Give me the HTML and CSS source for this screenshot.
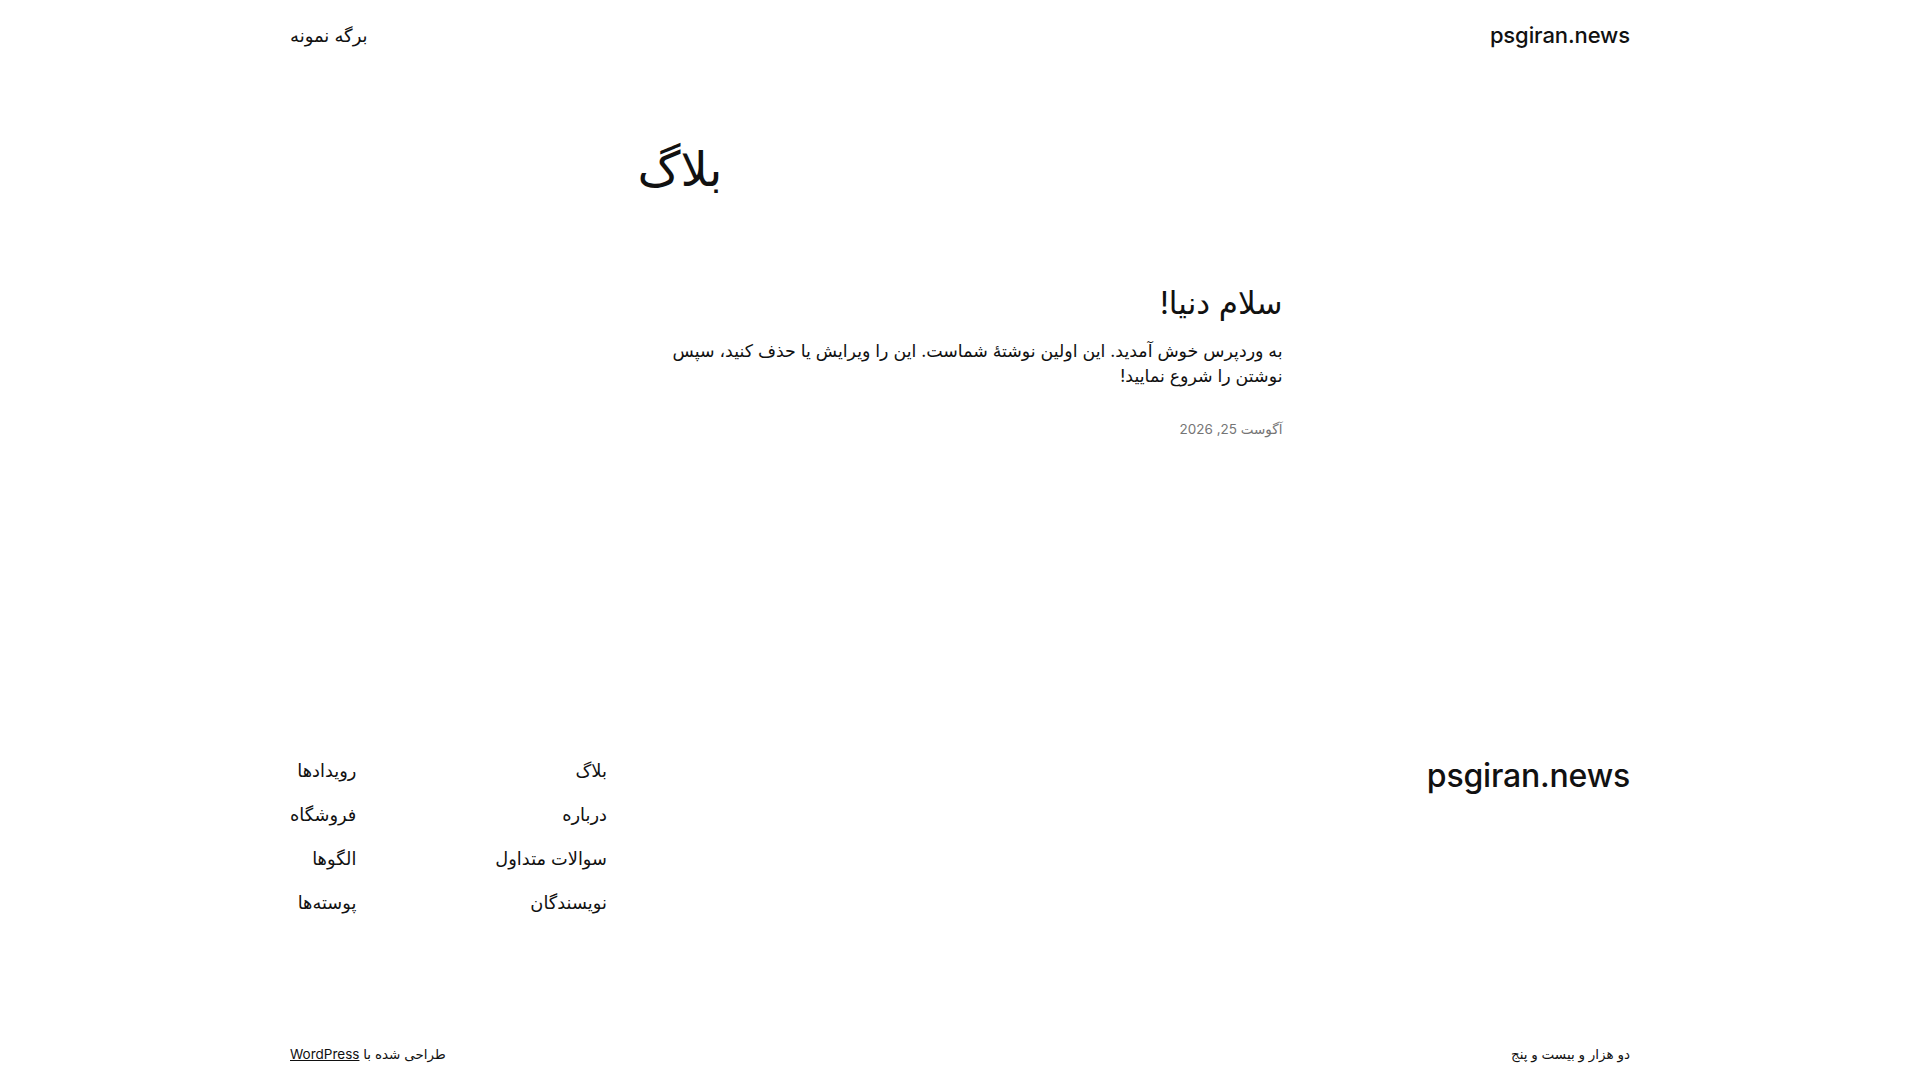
FILE: index.html
```html
<!DOCTYPE html>
<html lang="fa" dir="rtl">
<head>
<meta charset="utf-8">
<title>بلاگ – psgiran.news</title>
<link rel="stylesheet" href="styles.css">
</head>
<body>
<div class="page">
  <header class="site-header">
    <a class="site-title" href="#">psgiran.news</a>
    <nav class="header-nav"><a href="#">برگه نمونه</a></nav>
  </header>

  <main class="main">
    <div class="content">
      <h1 class="archive-title">بلاگ</h1>
      <article class="post">
        <h2 class="post-title">سلام دنیا!</h2>
        <p class="post-excerpt">به وردپرس خوش آمدید. این اولین نوشتهٔ شماست. این را ویرایش یا حذف کنید، سپس نوشتن را شروع نمایید!</p>
        <div class="post-date">آگوست 25, 2026</div>
      </article>
    </div>
  </main>

  <footer class="site-footer">
    <div class="footer-top">
      <a class="footer-title" href="#">psgiran.news</a>
      <div class="footer-navs">
        <ul class="footer-col">
          <li><a href="#">بلاگ</a></li>
          <li><a href="#">درباره</a></li>
          <li><a href="#">سوالات متداول</a></li>
          <li><a href="#">نویسندگان</a></li>
        </ul>
        <ul class="footer-col">
          <li><a href="#">رویدادها</a></li>
          <li><a href="#">فروشگاه</a></li>
          <li><a href="#">الگوها</a></li>
          <li><a href="#">پوسته‌ها</a></li>
        </ul>
      </div>
    </div>
    <div class="footer-bottom">
      <span>دو هزار و بیست و پنج</span>
      <span>طراحی شده با <a class="wp-link" href="#">WordPress</a></span>
    </div>
  </footer>
</div>
</body>
</html>
```

FILE: styles.css
```css
* { box-sizing: border-box; }
html, body { margin: 0; padding: 0; background: #ffffff; }
body {
  font-family: "Inter", "DejaVu Sans", sans-serif;
  color: #111111;
  font-size: 18px;
}
a { color: inherit; text-decoration: none; }

.page {
  width: 1340px;
  margin: 0 auto;
}

.site-header {
  height: 70px;
  display: flex;
  justify-content: space-between;
  align-items: center;
}
.site-title {
  font-size: 22px;
  font-weight: 500;
  letter-spacing: -0.1px;
}
.header-nav { font-size: 18px; }

.content {
  width: 645px;
  margin: 0 auto;
}
.archive-title {
  margin: 70px 0 0 0;
  font-size: 48px;
  font-weight: 400;
  line-height: 1.2;
  text-align: left;
}
.post { margin-top: 86px; }
.post-title {
  margin: 0;
  font-size: 31px;
  font-weight: 400;
  line-height: 1.2;
}
.post-excerpt {
  margin: 17px 0 0 0;
  font-size: 17.4px;
  line-height: 25px;
}
.post-date {
  margin-top: 31px;
  font-size: 13.5px;
  line-height: 20px;
  color: #757575;
}

.site-footer { margin-top: 317px; }
.footer-top {
  display: flex;
  justify-content: space-between;
  align-items: flex-start;
}
.footer-title {
  font-size: 32px;
  font-weight: 500;
  line-height: 40px;
  letter-spacing: -0.2px;
}
.footer-navs {
  display: flex;
  gap: 139px;
  padding-top: 2px;
}
.footer-col {
  list-style: none;
  margin: 0;
  padding: 0;
  display: flex;
  flex-direction: column;
  gap: 18px;
  font-size: 17.8px;
  line-height: 26px;
}

.footer-bottom {
  margin-top: 128px;
  display: flex;
  justify-content: space-between;
  align-items: center;
  font-size: 13.5px;
  line-height: 20px;
}
.wp-link { text-decoration: underline; }
```
